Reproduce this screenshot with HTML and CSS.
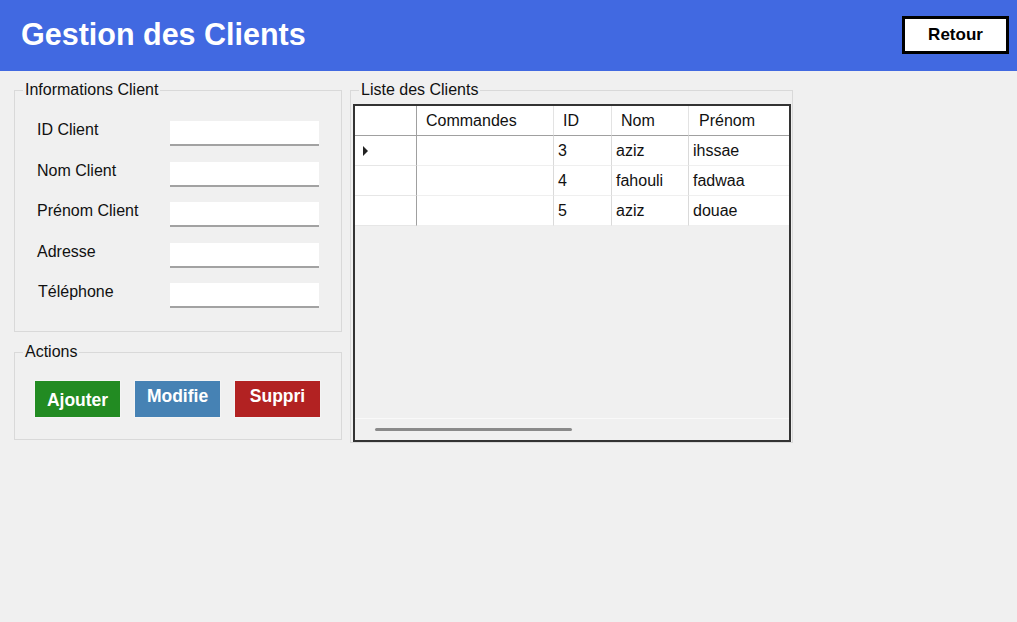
FILE: index.html
```html
<!DOCTYPE html>
<html lang="fr">
<head>
<meta charset="utf-8">
<title>Gestion des Clients</title>
<link rel="stylesheet" href="styles.css">
</head>
<body>
<header class="topbar">
  <h1 class="title">Gestion des Clients</h1>
  <button class="back-btn">Retour</button>
</header>
<main class="content">
  <div class="left-col">
    <fieldset class="group info-group">
      <legend class="group-title">Informations Client</legend>
      <div class="form-grid">
        <label class="form-label">ID Client</label><input class="field" type="text">
        <label class="form-label">Nom Client</label><input class="field" type="text">
        <label class="form-label">Prénom Client</label><input class="field" type="text">
        <label class="form-label">Adresse</label><input class="field" type="text">
        <label class="form-label shift">Téléphone</label><input class="field" type="text">
      </div>
    </fieldset>
    <fieldset class="group actions-group">
      <legend class="group-title">Actions</legend>
      <div class="actions">
        <button class="action-btn add">Ajouter</button>
        <button class="action-btn edit raised">Modifie</button>
        <button class="action-btn del raised">Suppri</button>
      </div>
    </fieldset>
  </div>
  <fieldset class="group list-group">
    <legend class="group-title">Liste des Clients</legend>
    <div class="datagrid">
      <div class="grid-row head-row">
        <div class="cell row-head"></div>
        <div class="cell head">Commandes</div>
        <div class="cell head">ID</div>
        <div class="cell head">Nom</div>
        <div class="cell head last">Prénom</div>
      </div>
      <div class="grid-row data-row">
        <div class="cell row-head"><span class="current-arrow"></span></div>
        <div class="cell data"></div>
        <div class="cell data">3</div>
        <div class="cell data">aziz</div>
        <div class="cell data last">ihssae</div>
      </div>
      <div class="grid-row data-row">
        <div class="cell row-head"></div>
        <div class="cell data"></div>
        <div class="cell data">4</div>
        <div class="cell data">fahouli</div>
        <div class="cell data last">fadwaa</div>
      </div>
      <div class="grid-row data-row">
        <div class="cell row-head"></div>
        <div class="cell data"></div>
        <div class="cell data">5</div>
        <div class="cell data">aziz</div>
        <div class="cell data last">douae</div>
      </div>
      <div class="grid-empty"></div>
      <div class="hscroll"><div class="hscroll-thumb"></div></div>
    </div>
  </fieldset>
</main>
</body>
</html>
```
FILE: styles.css
```css
* { box-sizing: border-box; }

body {
  margin: 0;
  background: #f0f0f0;
  font-family: "Liberation Sans", Arial, sans-serif;
  font-size: 16px;
  color: #000;
}

.topbar {
  height: 71px;
  background: #4169e1;
  display: flex;
  align-items: center;
  justify-content: space-between;
  padding: 0 8px 2px 21px;
}

.title {
  margin: 0;
  font-size: 30.5px;
  line-height: 1;
  font-weight: bold;
  color: #fff;
}

.back-btn {
  width: 107px;
  height: 38px;
  border: 3px solid #000;
  background: #fff;
  font-family: "Liberation Sans", Arial, sans-serif;
  font-size: 17px;
  font-weight: bold;
  color: #000;
  padding: 0;
}

.content {
  display: flex;
  align-items: flex-start;
  gap: 8px;
  padding: 10px 0 0 14px;
}

.left-col {
  width: 328px;
  display: flex;
  flex-direction: column;
  gap: 11px;
}

.group {
  margin: 0;
  padding: 0;
  border: 1px solid #d9d9d9;
  min-width: 0;
}

.group-title {
  margin-left: 8px;
  padding: 0 2px;
  line-height: 18px;
  font-size: 16px;
  color: #111;
}

.form-grid {
  display: grid;
  grid-template-columns: 133px 149px;
  row-gap: 15.5px;
  align-items: start;
  padding: 22px 0 23px 22px;
}

.form-label {
  line-height: 18px;
  color: #111;
}

.form-label.shift { padding-left: 1px; }

.field {
  display: block;
  width: 149px;
  height: 25px;
  margin: 0;
  border: none;
  border-bottom: 2px solid #a2a2a2;
  background: #fff;
  font-family: "Liberation Sans", Arial, sans-serif;
  font-size: 15px;
}

.actions {
  display: flex;
  gap: 13px;
  padding: 19px 0 21px 19px;
}

.action-btn {
  width: 87px;
  height: 38px;
  padding: 3px 0 0;
  border: 1px solid #f4f4f4;
  font-family: "Liberation Sans", Arial, sans-serif;
  font-size: 17.5px;
  font-weight: bold;
  color: #fff;
}

.action-btn.raised { padding: 0 0 6px; }

.add { background: #228b22; }
.edit { background: #4682b4; }
.del { background: #b22222; }

.list-group {
  width: 443px;
}

.datagrid {
  margin: 5px 1px 0 2px;
  height: 338px;
  border: 2px solid #333;
  display: flex;
  flex-direction: column;
  background: #fff;
}

.grid-row {
  display: grid;
  grid-template-columns: 62px 137px 58px 77px 100px;
  height: 30px;
  flex: none;
}

.cell {
  display: flex;
  align-items: center;
  white-space: nowrap;
  overflow: hidden;
  background: #fff;
  line-height: 18px;
  color: #111;
}

.head-row .cell {
  border-right: 1px solid #e3e3e3;
  border-bottom: 1px solid #a0a0a0;
  padding-left: 9px;
}

.head-row .cell.row-head {
  border-right: 1px solid #a0a0a0;
}

.data-row .cell {
  border-right: 1px solid #dadada;
  border-bottom: 1px solid #efefef;
  padding-left: 4px;
}

.data-row .cell.row-head {
  border-right: 1px solid #a0a0a0;
  border-bottom: 1px solid #e6e6e6;
  padding-left: 8px;
}

.cell.last { border-right: none; }

.head-row .cell.last { padding-left: 10px; }

.current-arrow {
  width: 0;
  height: 0;
  border-left: 5px solid #222;
  border-top: 5px solid transparent;
  border-bottom: 5px solid transparent;
}

.grid-empty {
  flex: 1;
  background: #f0f0f0;
}

.hscroll {
  height: 22px;
  flex: none;
  background: #f0f0f0;
  border-top: 1px solid #f9f9f9;
  padding: 9px 0 0 20px;
}

.hscroll-thumb {
  width: 197px;
  height: 3px;
  border-radius: 2px;
  background: #8a8a8a;
}
```
